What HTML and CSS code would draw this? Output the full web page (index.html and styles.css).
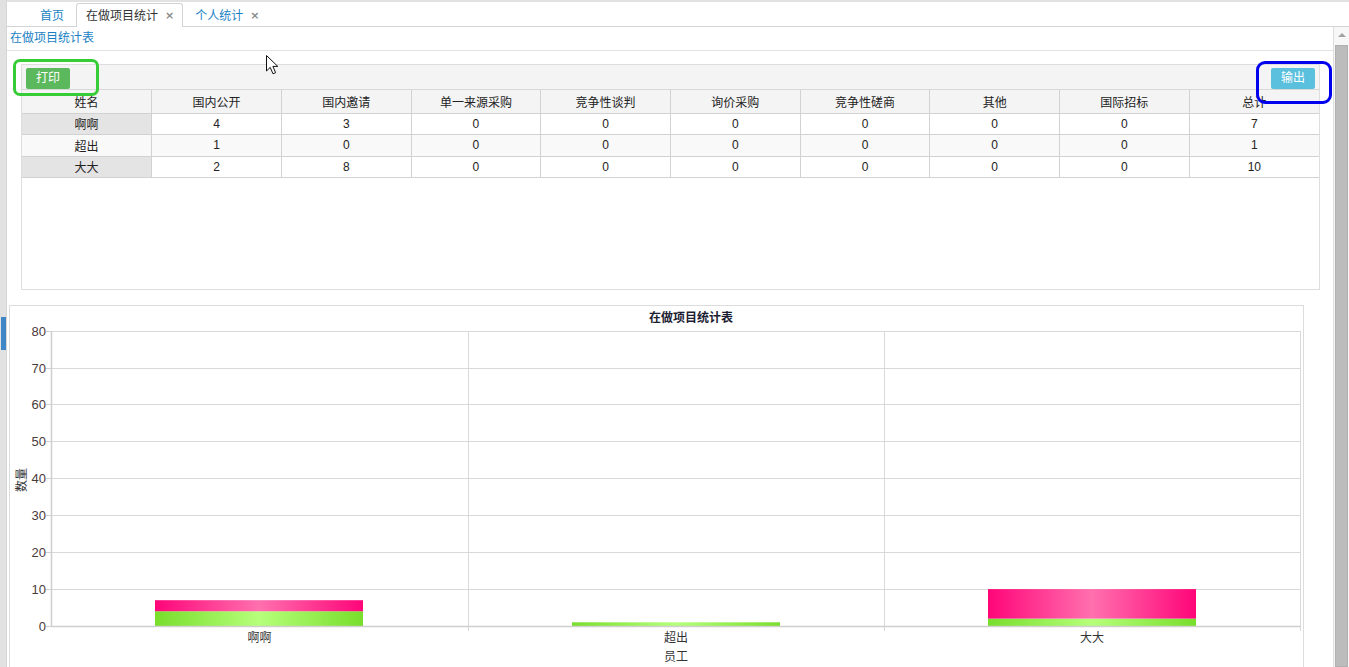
FILE: index.html
```html
<!DOCTYPE html>
<html lang="zh">
<head>
<meta charset="utf-8">
<title>在做项目统计</title>
<link rel="stylesheet" href="styles.css">
</head>
<body>
<div class="app">
  <div class="side"><div class="side-mark"></div></div>
  <div class="main">
    <div class="tabbar">
      <div class="tab tab-first">首页</div>
      <div class="tab active">在做项目统计<span class="x">×</span></div>
      <div class="tab">个人统计<span class="x">×</span></div>
    </div>
    <div class="frame">
      <div class="content">
        <div class="page-title">在做项目统计表</div>
        <div class="grid-panel">
          <div class="toolbar">
            <button class="btn btn-print">打印</button>
            <button class="btn btn-export">输出</button>
          </div>
          <table class="grid">
            <thead>
              <tr><th>姓名</th><th>国内公开</th><th>国内邀请</th><th>单一来源采购</th><th>竞争性谈判</th><th>询价采购</th><th>竞争性磋商</th><th>其他</th><th>国际招标</th><th>总计</th></tr>
            </thead>
            <tbody>
              <tr><td class="name">啊啊</td><td>4</td><td>3</td><td>0</td><td>0</td><td>0</td><td>0</td><td>0</td><td>0</td><td>7</td></tr>
              <tr class="alt"><td class="name">超出</td><td>1</td><td>0</td><td>0</td><td>0</td><td>0</td><td>0</td><td>0</td><td>0</td><td>1</td></tr>
              <tr><td class="name">大大</td><td>2</td><td>8</td><td>0</td><td>0</td><td>0</td><td>0</td><td>0</td><td>0</td><td>10</td></tr>
            </tbody>
          </table>
        </div>
        <div class="chart-panel">
          <svg class="chart" width="1293" height="370" viewBox="0 0 1293 370">
            <defs>
              <linearGradient id="gPink" x1="0" y1="0" x2="1" y2="0">
                <stop offset="0" stop-color="#ff0579"/>
                <stop offset="0.5" stop-color="#ff70ae"/>
                <stop offset="1" stop-color="#ff0579"/>
              </linearGradient>
              <linearGradient id="gGreen" x1="0" y1="0" x2="1" y2="0">
                <stop offset="0" stop-color="#78de2b"/>
                <stop offset="0.5" stop-color="#b6ff7b"/>
                <stop offset="1" stop-color="#78de2b"/>
              </linearGradient>
            </defs>
            <text class="c-title" x="681" y="15.5" text-anchor="middle">在做项目统计表</text>
            <g class="grid-lines">
              <line x1="41" y1="25.5" x2="1290" y2="25.5"/>
              <line x1="41" y1="62.5" x2="1290" y2="62.5"/>
              <line x1="41" y1="98.5" x2="1290" y2="98.5"/>
              <line x1="41" y1="135.5" x2="1290" y2="135.5"/>
              <line x1="41" y1="172.5" x2="1290" y2="172.5"/>
              <line x1="41" y1="209.5" x2="1290" y2="209.5"/>
              <line x1="41" y1="246.5" x2="1290" y2="246.5"/>
              <line x1="41" y1="283.5" x2="1290" y2="283.5"/>
              <line x1="458.5" y1="25" x2="458.5" y2="325"/>
              <line x1="874.5" y1="25" x2="874.5" y2="325"/>
              <line x1="1290.5" y1="25" x2="1290.5" y2="325"/>
            </g>
            <g class="ticks">
              <line x1="36" y1="25.5" x2="41" y2="25.5"/>
              <line x1="36" y1="62.5" x2="41" y2="62.5"/>
              <line x1="36" y1="98.5" x2="41" y2="98.5"/>
              <line x1="36" y1="135.5" x2="41" y2="135.5"/>
              <line x1="36" y1="172.5" x2="41" y2="172.5"/>
              <line x1="36" y1="209.5" x2="41" y2="209.5"/>
              <line x1="36" y1="246.5" x2="41" y2="246.5"/>
              <line x1="36" y1="283.5" x2="41" y2="283.5"/>
              <line x1="36" y1="320.5" x2="41" y2="320.5"/>
            </g>
            <g class="y-labels">
              <text x="36" y="30">80</text>
              <text x="36" y="67">70</text>
              <text x="36" y="103">60</text>
              <text x="36" y="140">50</text>
              <text x="36" y="177">40</text>
              <text x="36" y="214">30</text>
              <text x="36" y="251">20</text>
              <text x="36" y="288">10</text>
              <text x="36" y="325">0</text>
            </g>
            <g class="bars">
              <rect x="145" y="305.25" width="208" height="14.75" fill="url(#gGreen)"/>
              <rect x="145" y="294.2" width="208" height="11.05" fill="url(#gPink)"/>
              <rect x="562" y="316.3" width="208" height="3.7" fill="url(#gGreen)"/>
              <rect x="978" y="312.6" width="208" height="7.4" fill="url(#gGreen)"/>
              <rect x="978" y="283.1" width="208" height="29.5" fill="url(#gPink)"/>
            </g>
            <line class="axis" x1="41.5" y1="25" x2="41.5" y2="321"/>
            <line class="axis" x1="41" y1="320.5" x2="1291" y2="320.5"/>
            <g class="x-labels">
              <text x="249.5" y="335.5" text-anchor="middle">啊啊</text>
              <text x="666" y="335.5" text-anchor="middle">超出</text>
              <text x="1082" y="335.5" text-anchor="middle">大大</text>
            </g>
            <text class="x-title" x="666" y="354.5" text-anchor="middle">员工</text>
            <text class="y-title" x="12" y="178" text-anchor="middle" transform="rotate(-90 12 174)">数量</text>
          </svg>
        </div>
      </div>
      <div class="scrollbar">
        <div class="sb-arrow"></div>
        <div class="sb-thumb"></div>
      </div>
    </div>
  </div>
  <div class="mark mark-green"></div>
  <div class="mark mark-blue"></div>
  <svg class="cursor" width="14" height="22" viewBox="0 0 14 22">
    <path d="M1.5 1.5 L1.5 17 L5.2 13.4 L8 19.8 L10.6 18.7 L7.9 12.4 L12.8 12.4 Z" fill="#fff" stroke="#111" stroke-width="1" stroke-linejoin="miter"/>
  </svg>
</div>
</body>
</html>
```

FILE: styles.css
```css
* { box-sizing: border-box; }
html, body {
  margin: 0;
  padding: 0;
  background: #fff;
  font-family: "Liberation Sans", "Noto Sans CJK SC", sans-serif;
  font-size: 12px;
  color: #333;
  overflow: hidden;
}
.app {
  position: relative;
  display: flex;
  width: 1349px;
  height: 667px;
  overflow: hidden;
}
.side {
  width: 7px;
  flex: none;
  background: #e1e1e1;
  border-right: 1px solid #d6d6d6;
  padding-top: 317px;
}
.side-mark {
  width: 5px;
  height: 33px;
  margin-left: 1px;
  background: #3f86c7;
}
.main {
  flex: 1;
  display: flex;
  flex-direction: column;
  min-width: 0;
}
.tabbar {
  display: flex;
  align-items: flex-end;
  height: 27px;
  border-top: 2px solid #e2e2e2;
  border-bottom: 1px solid #d4d4d4;
  padding-left: 22px;
}
.tab {
  height: 23px;
  line-height: 22px;
  padding: 0 10px;
  margin-right: 1px;
  margin-bottom: -1px;
  border: 1px solid transparent;
  border-bottom: none;
  color: #1a82c4;
  font-size: 12px;
  display: flex;
  align-items: center;
}
.tab.active {
  color: #333;
  background: #fff;
  border-color: #d4d4d4;
  border-radius: 3px 3px 0 0;
  padding: 0 8px 0 9px;
  height: 24px;
}
.tab .x {
  margin-left: 7px;
  color: #8a8a8a;
  font-weight: bold;
  font-size: 11px;
  font-family: "DejaVu Sans", sans-serif;
}
.frame {
  flex: 1;
  display: flex;
  min-height: 0;
}
.content {
  flex: 1;
  min-width: 0;
}
.page-title {
  height: 24px;
  line-height: 23px;
  padding-left: 3px;
  color: #1a82c4;
  border-bottom: 1px solid #e3e3e3;
}
.grid-panel {
  margin: 13px 13px 0 14px;
  height: 226px;
  border: 1px solid #dedede;
}
.toolbar {
  height: 25px;
  background: #f4f4f4;
  padding: 3px 4px 0 4px;
  display: flex;
  justify-content: space-between;
  border-bottom: 1px solid #d8d8d8;
}
.btn {
  width: 44px;
  height: 21px;
  border: none;
  border-radius: 2px;
  color: #fff;
  font-family: "Liberation Sans", "Noto Sans CJK SC", sans-serif;
  font-size: 12px;
  padding: 0;
  line-height: 21px;
}
.btn-print { background: #5cb85c; }
.btn-export { background: #5bc0de; }
.grid {
  width: 100%;
  table-layout: fixed;
  border-collapse: collapse;
}
.grid th, .grid td {
  border: 1px solid #d2d2d2;
  text-align: center;
  font-weight: normal;
  padding: 0;
  color: #222;
}
.grid tr > :first-child { border-left: none; }
.grid tr > :last-child { border-right: none; }
.grid thead th {
  border-top: none;
  height: 23px;
  background: #f4f4f4;
}
.grid td { height: 21.5px; background: #fff; }
.grid tr.alt td { background: #f9f9f9; }
.grid td.name { background: #e4e4e4; }
.chart-panel {
  margin: 15px 29px 0 2px;
  height: 400px;
  border: 1px solid #dcdcdc;
}
.chart { display: block; }
.chart text {
  font-family: "Liberation Sans", "Noto Sans CJK SC", sans-serif;
  font-size: 12px;
  fill: #333;
}
.chart .c-title { font-weight: bold; fill: #1d1d33; }
.chart .grid-lines line { stroke: #d9d9d9; stroke-width: 1; }
.chart .ticks line { stroke: #cfcfcf; stroke-width: 1; }
.chart .axis { stroke: #cfcfcf; stroke-width: 1.5; }
.chart .y-labels text { text-anchor: end; font-size: 13px; fill: #4a3b3b; }
.scrollbar {
  width: 16px;
  flex: none;
  background: #f7f7f7;
  border-left: 1px solid #dedede;
  display: flex;
  flex-direction: column;
  align-items: center;
  padding-top: 6px;
}
.sb-arrow {
  width: 0;
  height: 0;
  border-left: 4px solid transparent;
  border-right: 4px solid transparent;
  border-bottom: 4px solid #a3a3a3;
}
.sb-thumb {
  margin-top: 8px;
  width: 13px;
  flex: 1;
  background: #bcbcbc;
  border: 1px solid #b0b0b0;
}
.mark {
  position: absolute;
  border-style: solid;
  border-width: 3px;
}
.mark-green {
  left: 13px;
  top: 59px;
  width: 86px;
  height: 37px;
  border-color: #35cc35;
  border-radius: 7px;
}
.mark-blue {
  left: 1256px;
  top: 61px;
  width: 76px;
  height: 43px;
  border-color: #0000ee;
  border-radius: 9px;
}
.cursor {
  position: absolute;
  left: 265px;
  top: 54px;
}
```
